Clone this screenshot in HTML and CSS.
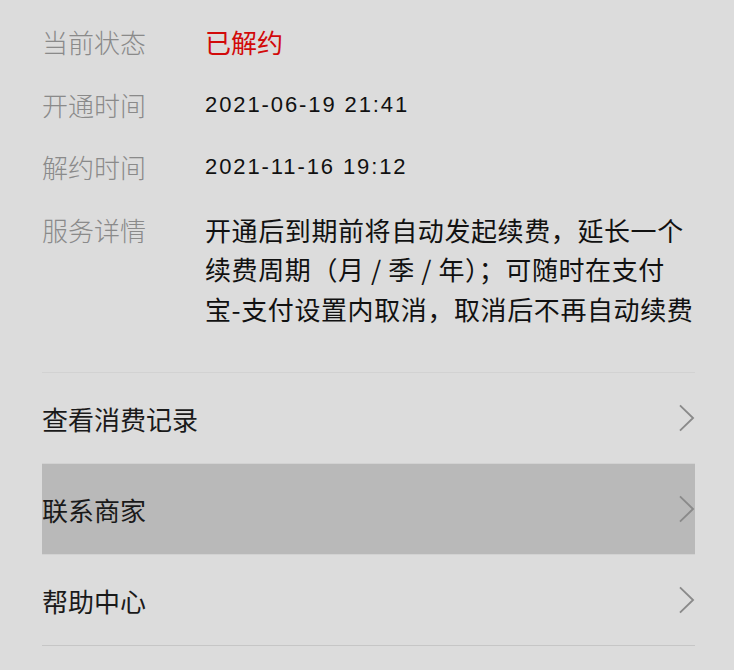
FILE: index.html
```html
<!DOCTYPE html>
<html lang="zh-CN">
<head>
    <meta charset="UTF-8">
    <meta name="viewport" content="width=device-width, initial-scale=1.0">
    <title>自动续费详情</title>
    <link rel="stylesheet" href="styles.css">
</head>
<body>
    <div class="page">
        <div class="info">
            <div class="info-row">
                <span class="label">当前状态</span>
                <span class="value status">已解约</span>
            </div>
            <div class="info-row">
                <span class="label">开通时间</span>
                <span class="value date">2021-06-19 21:41</span>
            </div>
            <div class="info-row">
                <span class="label">解约时间</span>
                <span class="value date">2021-11-16 19:12</span>
            </div>
            <div class="info-row">
                <span class="label">服务详情</span>
                <span class="value detail">开通后到期前将自动发起续费，延长一个续费周期（月 / 季 / 年）；可随时在支付宝-支付设置内取消，取消后不再自动续费</span>
            </div>
        </div>

        <ul class="menu">
            <li class="menu-item">
                <span>查看消费记录</span>
                <svg class="chevron" viewBox="0 0 18 30"><path d="M2 1.5 L16 15 L2 28.5"/></svg>
            </li>
            <li class="menu-item active">
                <span>联系商家</span>
                <svg class="chevron" viewBox="0 0 18 30"><path d="M2 1.5 L16 15 L2 28.5"/></svg>
            </li>
            <li class="menu-item">
                <span>帮助中心</span>
                <svg class="chevron" viewBox="0 0 18 30"><path d="M2 1.5 L16 15 L2 28.5"/></svg>
            </li>
        </ul>
    </div>
</body>
</html>
```

FILE: styles.css
```css
body {
    margin: 0;
    background-color: #dcdcdc;
    font-family: "Noto Sans CJK SC", "Noto Sans", sans-serif;
    color: #1a1a1a;
}
.page {
    padding: 22px 39px 0 42px;
}
.info {
    padding-bottom: 44px;
    border-bottom: 1px solid #d2d2d2;
}
.info-row {
    display: grid;
    grid-template-columns: 163px 1fr;
    font-size: 26px;
    line-height: 39px;
    margin-bottom: 23.5px;
}
.info-row:last-child {
    margin-bottom: 0;
}
.label {
    color: #8a8a8a;
    font-weight: 300;
}
.status {
    color: #d20a0a;
}
.date {
    font-family: "Liberation Sans", Arial, sans-serif;
    font-size: 22px;
    letter-spacing: 1.9px;
    color: #111;
}
.detail {
    max-width: 497px;
    line-height: 39.5px;
    letter-spacing: 0.6px;
    color: #111;
}
.menu {
    list-style: none;
    margin: 0;
    padding: 0;
}
.menu-item {
    display: flex;
    justify-content: space-between;
    align-items: center;
    height: 90px;
    border-bottom: 1px solid #d2d2d2;
    font-size: 26px;
    color: #1a1a1a;
}
.menu-item:last-child {
    border-bottom-color: #c6c6c6;
}
.menu-item.active {
    background-color: #b9b9b9;
}
.chevron {
    width: 17px;
    height: 28px;
    fill: none;
    stroke: #8a8a8a;
    stroke-width: 2;
}
```
